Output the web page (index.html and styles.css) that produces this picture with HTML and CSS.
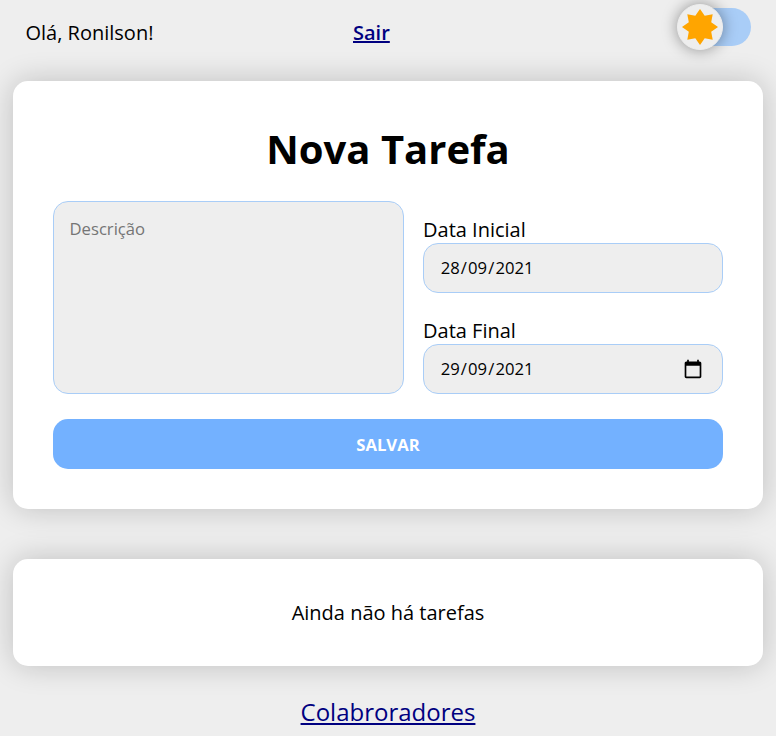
FILE: index.html
```html
<!DOCTYPE html>
<html lang="pt-BR">
<head>
<meta charset="utf-8">
<title>Nova Tarefa</title>
<link rel="stylesheet" href="styles.css">
</head>
<body>
<header class="topbar">
  <span class="greeting">Olá, Ronilson!</span>
  <a class="logout" href="#">Sair</a>
  <div class="toggle">
    <div class="knob">
      <svg width="36" height="36" viewBox="-18 -18 36 36"><path fill="#ffa500" d="M0-18 4.700-11.200 12.700-12.700 11.200-4.700 18 0 11.200 4.700 12.700 12.700 4.700 11.200 0 18-4.700 11.200-12.700 12.700-11.200 4.700-18 0-11.200-4.700-12.700-12.700-4.700-11.200Z"/></svg>
    </div>
  </div>
</header>
<main>
  <section class="card form-card">
    <h1>Nova Tarefa</h1>
    <form class="form">
      <textarea class="field description" placeholder="Descrição"></textarea>
      <div class="dates">
        <div class="date-group">
          <div class="label">Data Inicial</div>
          <div class="field date"><div class="value"><span>28</span>/<span>09</span>/<span>2021</span></div></div>
        </div>
        <div class="date-group">
          <div class="label">Data Final</div>
          <div class="field date"><div class="value"><span>29</span>/<span>09</span>/<span>2021</span></div>
            <svg class="calendar" width="20" height="20" viewBox="0 0 24 24"><path d="M20 3h-1V1h-2v2H7V1H5v2H4c-1.100 0-2 .9-2 2v16c0 1.100.9 2 2 2h16c1.100 0 2-.9 2-2V5c0-1.100-.9-2-2-2zm0 18H4V8h16v13z"/></svg>
          </div>
        </div>
      </div>
      <button class="save" type="button">SALVAR</button>
    </form>
  </section>
  <section class="card empty-card">Ainda não há tarefas</section>
</main>
<footer class="footer"><a href="#">Colabroradores</a></footer>
</body>
</html>
```
FILE: styles.css
```css
* { box-sizing: border-box; }
html, body { height: 100%; overflow: hidden; }
body {
  margin: 0;
  background: #eee;
  color: #000;
  font: 20px/27px "Open Sans", sans-serif;
}
a { color: navy; }
.topbar {
  display: grid;
  grid-template-columns: 327.5px 1fr 70px;
  height: 81px;
  padding: 8px 25px 0 25.5px;
}
.greeting, .logout { padding-top: 11px; }
.logout { font-weight: 600; justify-self: start; }
.toggle {
  display: flex;
  align-items: center;
  width: 70px;
  height: 38px;
  border-radius: 19px;
  background: #a9cdf7;
}
.knob {
  display: flex;
  align-items: center;
  justify-content: center;
  flex: none;
  width: 46px;
  height: 46px;
  margin-left: -4px;
  border: 1px solid #eee;
  border-radius: 50%;
  background: #eee;
  box-shadow: 0 0 15px rgba(0, 0, 0, .4);
}
.card {
  margin: 0 13px;
  border-radius: 15px;
  background: #fff;
  box-shadow: 0 0 30px rgba(0, 0, 0, .2);
}
.form-card { height: 428px; padding: 41px 40px 40px; }
h1 {
  margin: 0 0 25px;
  font-size: 40px;
  line-height: 54px;
  font-weight: 700;
  text-align: center;
}
.form {
  display: grid;
  grid-template-columns: 351px 300px;
  grid-template-rows: 193px 50px;
  gap: 25px 19px;
}
.field {
  border: 1px solid #a9cdf7;
  border-radius: 15px;
  background: #eee;
}
.description {
  margin: 0;
  padding: 16px 15.5px;
  font: 16.6667px/22px "Open Sans", sans-serif;
  resize: none;
}
.description::placeholder { color: #757575; }
.dates {
  display: flex;
  flex-direction: column;
  justify-content: space-between;
  padding-top: 15px;
}
.date {
  display: flex;
  align-items: center;
  justify-content: space-between;
  height: 50px;
  padding: 0 19px 0 15.5px;
  font-size: 16.6667px;
}
.value { padding-bottom: 2px; }
.value span { padding: 0 1.15px; }
.save {
  grid-column: 1 / -1;
  padding: 2px 0 0;
  border: 0;
  border-radius: 15px;
  background: #73b1ff;
  color: #fff;
  font: 700 16.6667px/22px "Open Sans", sans-serif;
}
.empty-card {
  margin-top: 50px;
  padding: 40px;
  text-align: center;
}
.footer {
  padding-top: 29px;
  font-size: 24px;
  line-height: 33px;
  text-align: center;
}
```
